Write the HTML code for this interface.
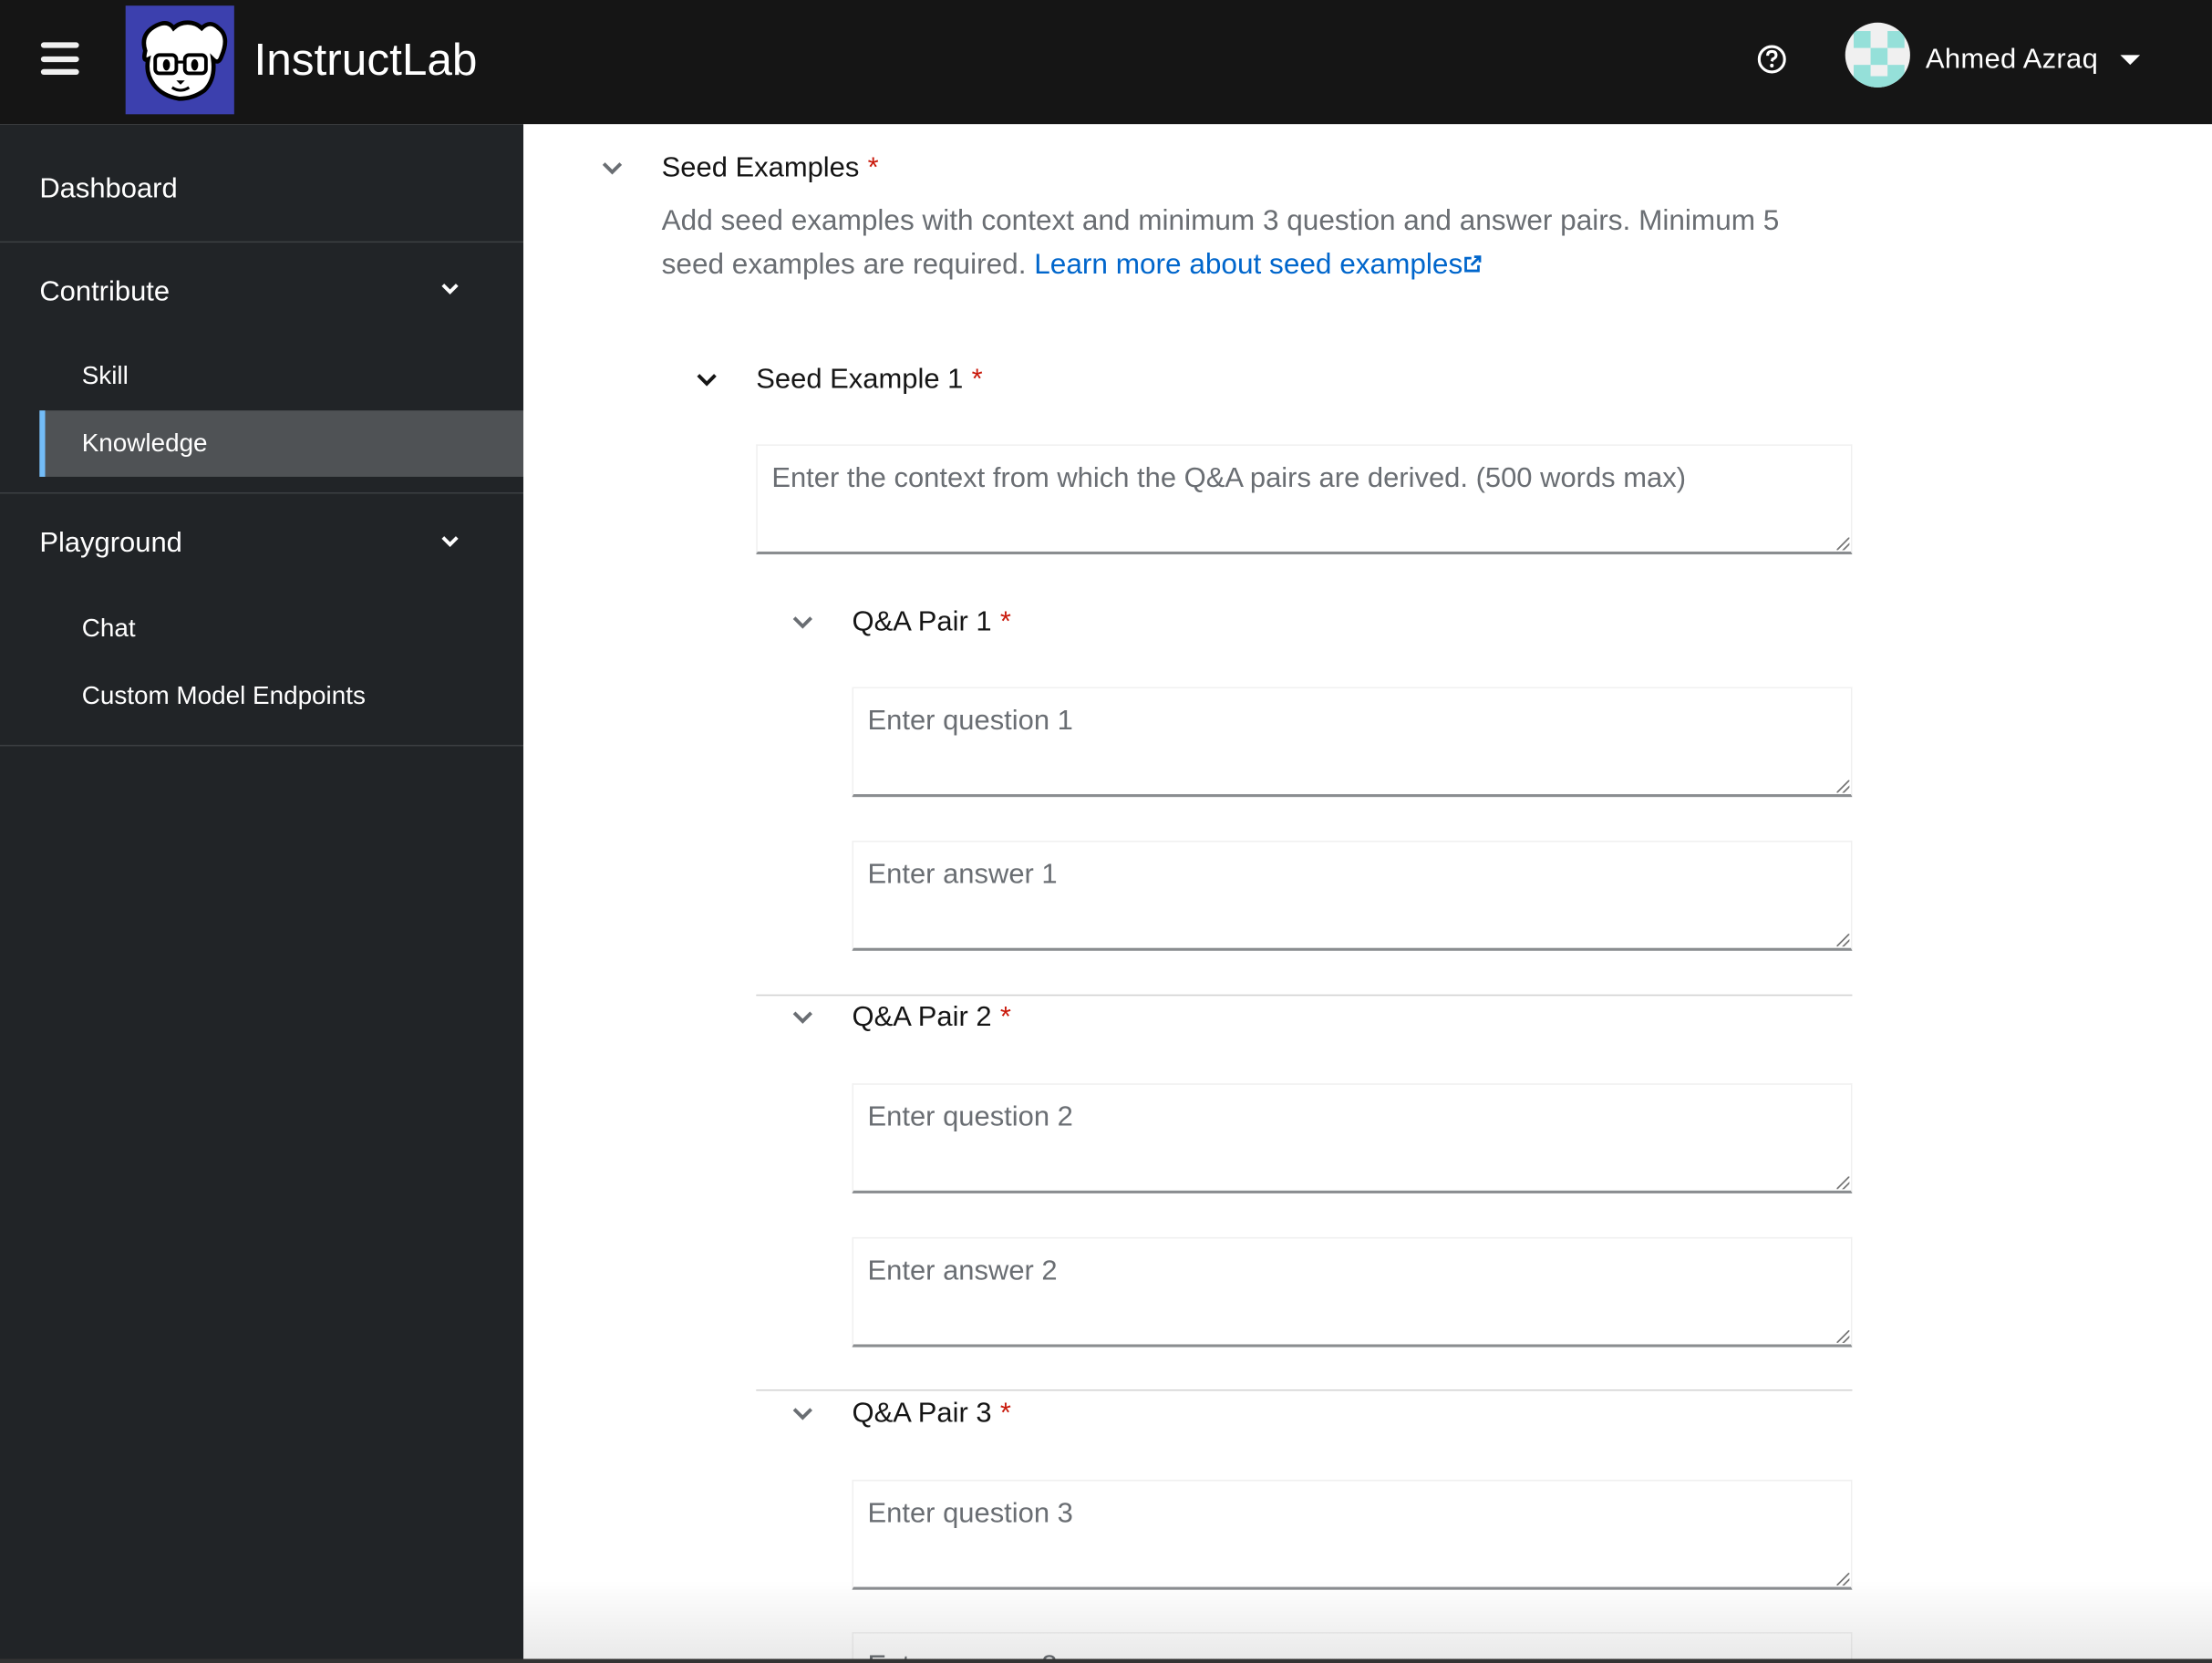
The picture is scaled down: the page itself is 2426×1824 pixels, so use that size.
<!DOCTYPE html>
<html><head><meta charset="utf-8"><style>
*{box-sizing:border-box;margin:0;padding:0}
html,body{width:2426px;height:1824px;overflow:hidden;background:#fff}
#w{position:absolute;left:0;top:0;width:1568px;height:1179px;transform:scale(1.54719);transform-origin:0 0;font-family:"Liberation Sans",sans-serif;overflow:hidden;background:#fff}
.a{position:absolute;white-space:nowrap}
.hdr{position:absolute;left:0;top:0;width:1568px;height:88px;background:#151515}
.side{position:absolute;left:0;top:88px;width:371px;height:1091px;background:#212427}
.st{position:absolute;color:#fff;font-size:20px;left:28px}
.ss{position:absolute;color:#fff;font-size:18px;left:58px}
.dv{position:absolute;left:0;width:371px;height:1px;background:#3c3f42}
.h{position:absolute;font-size:20px;color:#151515;white-space:nowrap}
.h b{color:#c9190b;font-weight:normal;margin-left:6px}
.ta{position:absolute;border:1px solid #f0f0f0;border-bottom:2px solid #8a8d90;background:#fff}
.ta span{position:absolute;left:10px;top:12px;font-size:20px;color:#6a6e73;white-space:nowrap}
.ta i{position:absolute;right:1px;bottom:1px;width:9px;height:9px;background:linear-gradient(135deg,transparent 45%,#777 46%,#777 54%,transparent 55%,transparent 70%,#777 71%,#777 79%,transparent 80%)}
.hr{position:absolute;left:536px;width:777px;height:1px;background:#d2d2d2}
.ch{position:absolute}
</style></head><body><div id="w">
<div class="hdr">
 <div class="a" style="left:29px;top:30px;width:27px;height:4px;background:#f0f0f0;border-radius:2px"></div>
 <div class="a" style="left:29px;top:40px;width:27px;height:4px;background:#f0f0f0;border-radius:2px"></div>
 <div class="a" style="left:29px;top:49px;width:27px;height:4px;background:#f0f0f0;border-radius:2px"></div>
 <div class="a" style="left:89px;top:4px;width:77px;height:77px;background:#3c40ae"></div>
 <svg class="a" style="left:89px;top:4px" width="77" height="77" viewBox="0 0 77 77">
  <path d="M14 32 Q10 20 22 14 Q30 10 34 16 Q38 12 44 12 Q50 12 54 16 Q60 10 66 16 Q74 22 68 36 Q66 42 62 38 Q64 52 56 60 Q48 66 38 66 Q26 64 20 56 Q14 48 16 38 Q12 40 14 32Z" fill="#fff" stroke="#000" stroke-width="3"/>
  <rect x="21" y="35" width="15" height="13" rx="3" fill="none" stroke="#000" stroke-width="2.5"/>
  <rect x="42" y="35" width="15" height="13" rx="3" fill="none" stroke="#000" stroke-width="2.5"/>
  <path d="M36 40 H42" stroke="#000" stroke-width="2"/>
  <ellipse cx="29" cy="42" rx="2.5" ry="4" fill="#000"/><ellipse cx="49" cy="42" rx="2.5" ry="4" fill="#000"/>
  <path d="M36 53 L42 53 L39 56Z" fill="#000"/><path d="M33 58 Q39 62 45 58" stroke="#000" stroke-width="2" fill="none"/>
 </svg>
 <div class="a" style="left:180px;top:24px;font-size:32px;color:#fff">InstructLab</div>
 <svg class="a" style="left:1245px;top:31px" width="22" height="22" viewBox="0 0 22 22"><circle cx="11" cy="11" r="9" fill="none" stroke="#fff" stroke-width="2"/><path d="M8 8.5 Q8 5.5 11 5.5 Q14 5.5 14 8.2 Q14 10 11.5 11 L11 12.5" fill="none" stroke="#fff" stroke-width="2"/><circle cx="11" cy="15.5" r="1.3" fill="#fff"/></svg>
 <div class="a" style="left:1308px;top:16px;width:46px;height:46px;border-radius:50%;background:#f0f0f0;overflow:hidden">
  <div class="a" style="left:6px;top:6px;width:12px;height:12px;background:#95e0d9"></div>
  <div class="a" style="left:30px;top:6px;width:12px;height:12px;background:#95e0d9"></div>
  <div class="a" style="left:18px;top:18px;width:12px;height:12px;background:#95e0d9"></div>
  <div class="a" style="left:6px;top:30px;width:12px;height:12px;background:#95e0d9"></div>
  <div class="a" style="left:30px;top:30px;width:12px;height:12px;background:#95e0d9"></div>
  <div class="a" style="left:0;top:38px;width:46px;height:12px;background:#95e0d9"></div>
 </div>
 <div class="a" style="left:1365px;top:31px;font-size:20px;color:#fff;letter-spacing:0.2px">Ahmed Azraq</div>
 <div class="a" style="left:1503px;top:39px;width:0;height:0;border-left:7px solid transparent;border-right:7px solid transparent;border-top:7px solid #fff"></div>
</div>
<div class="side">
 <div class="st" style="top:35px">Dashboard</div>
 <div class="dv" style="top:83px"></div>
 <div class="st" style="top:108px">Contribute</div>
 <svg class="a" style="left:312px;top:112px" width="14" height="10"><path d="M2 2 L7 7 L12 2" stroke="#fff" stroke-width="2.5" fill="none"/></svg>
 <div class="ss" style="top:168px">Skill</div>
 <div class="a" style="left:28px;top:203px;width:343px;height:47px;background:#4f5255;border-left:4px solid #73bcf7"></div>
 <div class="ss" style="top:216px">Knowledge</div>
 <div class="dv" style="top:261px"></div>
 <div class="st" style="top:286px">Playground</div>
 <svg class="a" style="left:312px;top:291px" width="14" height="10"><path d="M2 2 L7 7 L12 2" stroke="#fff" stroke-width="2.5" fill="none"/></svg>
 <div class="ss" style="top:347px">Chat</div>
 <div class="ss" style="top:395px">Custom Model Endpoints</div>
 <div class="dv" style="top:440px"></div>
</div>
<svg class="ch" style="left:426px;top:114px" width="16" height="11"><path d="M2 2 L8 8 L14 2" stroke="#6a6e73" stroke-width="2.5" fill="none"/></svg>
<div class="h" style="left:469px;top:108px">Seed Examples<b>*</b></div>
<div class="a" style="left:469px;top:142px;font-size:20.4px;color:#6a6e73;line-height:31px">Add seed examples with context and minimum 3 question and answer pairs. Minimum 5<br>seed examples are required. <span style="color:#0066cc">Learn more about seed examples</span><svg width="14" height="14" viewBox="0 0 14 14" style="vertical-align:0"><path d="M6 3 H2 V12 H11 V8" stroke="#0066cc" stroke-width="1.8" fill="none"/><path d="M8 2 H12 V6 M12 2 L6 8" stroke="#0066cc" stroke-width="1.8" fill="none"/></svg></div>
<svg class="ch" style="left:493px;top:264px" width="16" height="11"><path d="M2 2 L8 8 L14 2" stroke="#151515" stroke-width="2.5" fill="none"/></svg>
<div class="h" style="left:536px;top:258px">Seed Example 1<b>*</b></div>
<div class="ta" style="left:536px;top:315px;width:777px;height:78px"><span>Enter the context from which the Q&amp;A pairs are derived. (500 words max)</span><i></i></div>

<svg class="ch" style="left:561px;top:436px" width="16" height="11"><path d="M2 2 L8 8 L14 2" stroke="#6a6e73" stroke-width="2.5" fill="none"/></svg>
<div class="h" style="left:604px;top:430px">Q&amp;A Pair 1<b>*</b></div>
<div class="ta" style="left:604px;top:487px;width:709px;height:78px"><span>Enter question 1</span><i></i></div>
<div class="ta" style="left:604px;top:596px;width:709px;height:78px"><span>Enter answer 1</span><i></i></div>
<div class="hr" style="top:705px"></div>

<svg class="ch" style="left:561px;top:716px" width="16" height="11"><path d="M2 2 L8 8 L14 2" stroke="#6a6e73" stroke-width="2.5" fill="none"/></svg>
<div class="h" style="left:604px;top:710px">Q&amp;A Pair 2<b>*</b></div>
<div class="ta" style="left:604px;top:768px;width:709px;height:78px"><span>Enter question 2</span><i></i></div>
<div class="ta" style="left:604px;top:877px;width:709px;height:78px"><span>Enter answer 2</span><i></i></div>
<div class="hr" style="top:985px"></div>

<svg class="ch" style="left:561px;top:997px" width="16" height="11"><path d="M2 2 L8 8 L14 2" stroke="#6a6e73" stroke-width="2.5" fill="none"/></svg>
<div class="h" style="left:604px;top:991px">Q&amp;A Pair 3<b>*</b></div>
<div class="ta" style="left:604px;top:1049px;width:709px;height:78px"><span>Enter question 3</span><i></i></div>
<div class="ta" style="left:604px;top:1157px;width:709px;height:78px"><span>Enter answer 3</span><i></i></div>
<div class="a" style="left:371px;top:1120px;width:1197px;height:59px;background:linear-gradient(rgba(0,0,0,0),rgba(0,0,0,0.09))"></div>
<div class="a" style="left:0;top:1176px;width:1568px;height:3px;background:#333"></div>
</div></body></html>
